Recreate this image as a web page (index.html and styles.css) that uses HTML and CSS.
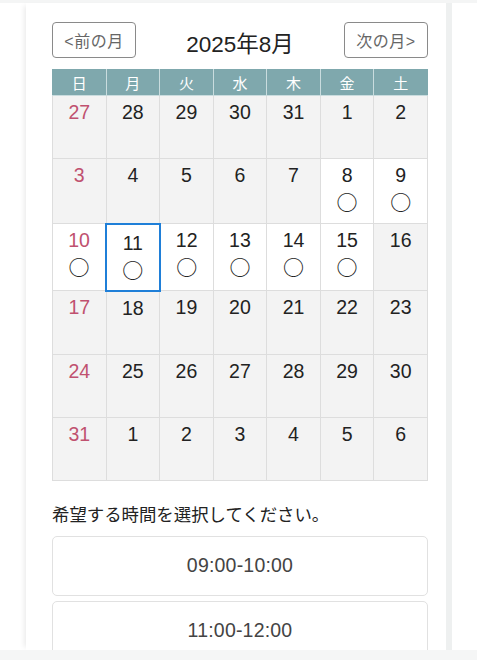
FILE: index.html
```html
<!DOCTYPE html>
<html lang="ja">
<head>
<meta charset="utf-8">
<link rel="stylesheet" href="styles.css">
</head>
<body>
<div class="topline"></div>
<div class="card">
  <div class="nav">
    <button class="navbtn">&lt;前の月</button>
    <div class="title">2025年8月</div>
    <button class="navbtn">次の月&gt;</button>
  </div>
  <table class="cal">
    <thead>
      <tr><th>日</th><th>月</th><th>火</th><th>水</th><th>木</th><th>金</th><th>土</th></tr>
    </thead>
    <tbody>
      <tr><td class="sun">27</td><td>28</td><td>29</td><td>30</td><td>31</td><td>1</td><td>2</td></tr>
      <tr><td class="sun">3</td><td>4</td><td>5</td><td>6</td><td>7</td><td class="open">8<span class="mark">○</span></td><td class="open">9<span class="mark">○</span></td></tr>
      <tr><td class="sun open">10<span class="mark">○</span></td><td class="open sel">11<span class="mark">○</span></td><td class="open">12<span class="mark">○</span></td><td class="open">13<span class="mark">○</span></td><td class="open">14<span class="mark">○</span></td><td class="open">15<span class="mark">○</span></td><td>16</td></tr>
      <tr><td class="sun">17</td><td>18</td><td>19</td><td>20</td><td>21</td><td>22</td><td>23</td></tr>
      <tr><td class="sun">24</td><td>25</td><td>26</td><td>27</td><td>28</td><td>29</td><td>30</td></tr>
      <tr><td class="sun">31</td><td>1</td><td>2</td><td>3</td><td>4</td><td>5</td><td>6</td></tr>
    </tbody>
  </table>
  <p class="label">希望する時間を選択してください。</p>
  <div class="slots">
    <div class="slot">09:00-10:00</div>
    <div class="slot">11:00-12:00</div>
  </div>
</div>
<div class="bottomband"></div>
</body>
</html>
```
FILE: styles.css
```css
html, body {
  margin: 0;
  padding: 0;
  background: #ffffff;
  height: 660px;
  overflow: hidden;
  font-family: "Liberation Sans", "Noto Sans CJK JP", sans-serif;
  color: #222;
}
.topline {
  height: 3px;
  background: #f4f5f5;
}
.card {
  margin-left: 26px;
  width: 426px;
  height: 647px;
  box-sizing: border-box;
  padding: 19px 24px 0 26px;
  background: #fff;
  border-right: 6px solid #eef0f0;
  box-shadow: -5px 0 5px -3px rgba(0,0,0,0.08);
  overflow: hidden;
}
.bottomband {
  height: 10px;
  background: #f5f6f6;
}
.nav {
  display: flex;
  align-items: center;
  justify-content: space-between;
  width: 376px;
  height: 36px;
}
.navbtn {
  width: 84px;
  height: 36px;
  background: #fff;
  border: 1px solid #8a8a8a;
  border-radius: 4px;
  font-family: "Liberation Sans", "Noto Sans CJK JP", sans-serif;
  font-size: 16px;
  color: #666;
  padding: 0;
  letter-spacing: 0.5px;
}
.title {
  font-size: 22.5px;
  color: #222;
  padding-top: 4px;
}
.cal {
  margin-top: 11px;
  width: 376px;
  border-collapse: collapse;
  table-layout: fixed;
}
.cal th {
  background: #7fa8ad;
  color: #fff;
  font-weight: normal;
  font-size: 15px;
  height: 25px;
  padding: 0;
  border: 1px solid #c9dcde;
  border-top-color: #7fa8ad;
}
.cal th:first-child { border-left-color: #7fa8ad; }
.cal th:last-child { border-right-color: #7fa8ad; }
.cal td {
  background: #f3f3f3;
  border: 1px solid #dddddd;
  text-align: center;
  vertical-align: top;
  padding: 4px 0 7px;
  height: 51px;
  font-size: 19.5px;
  line-height: 24px;
  color: #222;
}
.cal td.open { background: #fff; }
.cal td.sun { color: #c0516f; }
.cal td.sel {
  border: 2px solid #1f7fd8;
  padding-top: 6px;
  padding-bottom: 6px;
}
.mark {
  display: block;
  color: #1a1a1a;
  font-family: "Noto Sans CJK JP", sans-serif;
  font-size: 21px;
  line-height: 29px;
  font-weight: 500;
}
.label {
  margin: 20px 0 9px;
  font-size: 17.4px;
  line-height: 26px;
  color: #222;
  font-family: "Noto Sans CJK JP", sans-serif;
}
.slots {
  display: flex;
  flex-direction: column;
  gap: 5px;
  width: 376px;
}
.slot {
  height: 60px;
  box-sizing: border-box;
  border: 1px solid #e1e1e1;
  border-radius: 5px;
  display: flex;
  align-items: center;
  justify-content: center;
  font-size: 19.5px;
  color: #444;
  letter-spacing: 0.2px;
}
```
